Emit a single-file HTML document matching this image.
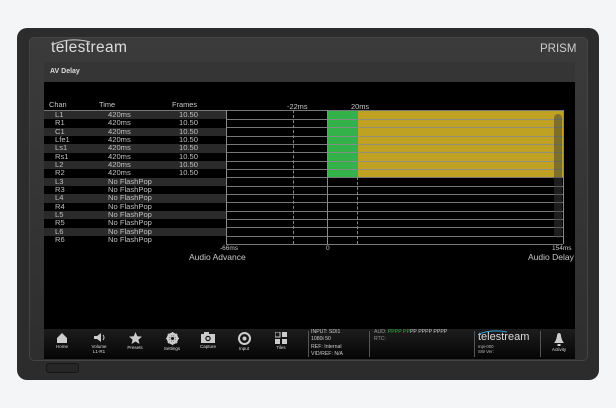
<!DOCTYPE html>
<html><head><meta charset="utf-8"><style>
*{margin:0;padding:0;box-sizing:border-box}
body{width:616px;height:408px;background:#f4f5f7;position:relative;overflow:hidden;font-family:"Liberation Sans",sans-serif}
.a{position:absolute}
#dev{left:17px;top:28px;width:582px;height:352px;background:#2c2c2c;border-radius:10px}
#bez{left:29px;top:37px;width:559px;height:324px;background:linear-gradient(#3b3b3b,#2e2e2e);border-radius:5px;border:1px solid #444}
#btn{left:46px;top:363px;width:33px;height:10px;border:1px solid #151515;border-radius:3px;background:#262626}
.t{color:#c8c8c8;font-size:7.4px;white-space:nowrap}
.row{position:absolute;left:44px;width:182px;height:8.33px}
.row span{position:absolute;top:0;font-size:7.6px;color:#c0c0c0;line-height:8.3px}
.g{position:absolute;left:226px;width:337px;height:1px;background:rgba(140,140,140,0.85);z-index:2}
.ic{position:absolute;top:332px;text-align:center;color:#ddd;font-size:4.5px;width:30px}
.ic svg{display:block;margin:0 auto 1px}
</style></head><body>
<div class="a" id="dev"></div>
<div class="a" id="bez"></div>
<div class="a" id="btn"></div>
<div class="a" style="left:51px;top:39px;font-size:15.5px;color:#ddd;letter-spacing:0.4px">telestream</div>
<svg class="a" style="left:52px;top:37px" width="40" height="8"><path d="M2 7 Q18 0 38 5" stroke="#ccc" stroke-width="1" fill="none"/></svg>
<div class="a" style="left:540px;top:43px;font-size:11.5px;color:#ccc">PRISM</div>
<div class="a" style="left:44px;top:62px;width:531px;height:20px;background:#353535"></div>
<div class="a" style="left:50px;top:68px;font-size:7px;color:#ddd;font-weight:bold">AV Delay</div>
<div class="a" style="left:44px;top:82px;width:531px;height:247px;background:#000"></div>
<div class="a t" style="left:49px;top:100px">Chan</div>
<div class="a t" style="left:99px;top:100px">Time</div>
<div class="a t" style="left:172px;top:100px">Frames</div>
<div class="a t" style="left:287px;top:102px">-22ms</div>
<div class="a t" style="left:351px;top:102px">20ms</div>
<div class="a" style="left:44px;top:110px;width:519px;height:1px;background:#777"></div>
<div id="rows"></div>
<div class="a" style="left:327px;top:111px;width:31px;height:66px;background:#34b24a"></div>
<div class="a" style="left:358px;top:111px;width:205px;height:66px;background:#c0a222"></div>
<div class="a" style="left:554px;top:114px;width:8px;height:124px;background:rgba(60,60,60,0.5);border-radius:4px;z-index:3"></div>
<div class="a" style="left:226px;top:110px;width:1px;height:134px;background:#8a8a8a"></div>
<div class="a" style="left:327px;top:110px;width:1px;height:134px;background:#8a8a8a"></div>
<div class="a" style="left:563px;top:110px;width:1px;height:134px;background:#8a8a8a"></div>
<div class="a" style="left:293px;top:110px;width:0;height:134px;border-left:1px dashed #888"></div>
<div class="a" style="left:357px;top:177px;width:0;height:67px;border-left:1px dashed #888"></div>
<div class="a t" style="left:220px;top:245px;font-size:6.5px">-66ms</div>
<div class="a t" style="left:189px;top:252px;font-size:8.5px">Audio Advance</div>
<div class="a t" style="left:326px;top:245px;font-size:6.5px">0</div>
<div class="a t" style="left:552px;top:245px;font-size:6.5px">154ms</div>
<div class="a t" style="left:528px;top:252px;font-size:8.5px">Audio Delay</div>
<div class="a" style="left:44px;top:329px;width:531px;height:30px;background:linear-gradient(#1d1d1d,#050505)"></div>
<div class="ic" style="left:47px"><svg width="12" height="11"><path d="M1 6 L6 1 L11 6 V11 H1Z" fill="#ccc"/></svg>Home</div>
<div class="ic" style="left:84px"><svg width="12" height="11"><path d="M1 4 H4 L8 1 V10 L4 7 H1Z" fill="#ccc"/><path d="M10 3 Q12 5.5 10 8" stroke="#ccc" fill="none"/></svg>Volume<br>L1-R1</div>
<div class="ic" style="left:120px"><svg width="13" height="12"><path d="M6.5 0 L8.3 4.3 L13 4.6 L9.4 7.6 L10.5 12 L6.5 9.5 L2.5 12 L3.6 7.6 L0 4.6 L4.7 4.3Z" fill="#ccc"/></svg>Presets</div>
<div class="ic" style="left:157px"><svg width="13" height="13"><circle cx="6.5" cy="6.5" r="4.5" fill="none" stroke="#ccc" stroke-width="2.5"/><path d="M6.5 0V13M0 6.5H13M2 2L11 11M11 2L2 11" stroke="#ccc" stroke-width="1.6"/><circle cx="6.5" cy="6.5" r="1.5" fill="#111"/></svg>Settings</div>
<div class="ic" style="left:193px"><svg width="14" height="11"><rect x="0" y="2" width="14" height="9" fill="#ccc"/><rect x="3" y="0" width="5" height="3" fill="#ccc"/><circle cx="7" cy="6.5" r="2.7" fill="#111"/><circle cx="7" cy="6.5" r="1.5" fill="#ccc"/></svg>Capture</div>
<div class="ic" style="left:229px"><svg width="13" height="13"><circle cx="6.5" cy="6.5" r="5.5" fill="none" stroke="#ccc" stroke-width="2"/><circle cx="6.5" cy="6.5" r="2" fill="#ccc"/></svg>Input</div>
<div class="ic" style="left:266px"><svg width="12" height="12"><rect x="0" y="0" width="5" height="5" fill="none" stroke="#ccc"/><rect x="7" y="0" width="5" height="5" fill="#ccc"/><rect x="0" y="7" width="5" height="5" fill="#ccc"/><rect x="7" y="7" width="5" height="5" fill="#ccc"/></svg>Tiles</div>
<div class="a" style="left:308px;top:331px;width:1px;height:26px;background:#555"></div>
<div class="a" style="left:311px;top:329px;font-size:5.2px;color:#ccc;line-height:7.3px">INPUT: SDI1<br>1080i 50<br>REF: Internal<br>VID/REF: N/A</div>
<div class="a" style="left:369px;top:331px;width:1px;height:26px;background:#555"></div>
<div class="a" style="left:374px;top:329px;font-size:5.2px;color:#999;line-height:7.3px">AUD: <span style="color:#2fae3d">PPPP PP</span><span style="color:#ccc">PP PPPP PPPP</span><br>RTC:</div>
<div class="a" style="left:474px;top:331px;width:1px;height:26px;background:#555"></div>
<div class="a" style="left:478px;top:331px;font-size:11px;color:#ddd">telestream</div>
<svg class="a" style="left:478px;top:330px" width="30" height="5"><path d="M1 4 Q14 -1 29 2" stroke="#2a9ad6" stroke-width="1" fill="none"/></svg>
<div class="a" style="left:478px;top:344px;font-size:4.3px;color:#bbb;line-height:5px">mpi-000<br>SW Ver:</div>
<div class="a" style="left:540px;top:331px;width:1px;height:26px;background:#555"></div>
<div class="ic" style="left:544px;top:333px"><svg width="10" height="13"><path d="M5 0 Q7 0 7 3 Q8 8 10 10 H0 Q2 8 3 3 Q3 0 5 0Z M3.5 11 H6.5 V13 H3.5Z" fill="#ccc"/></svg>Activity</div>
<script>
var d=[["L1","420ms","10.50"],["R1","420ms","10.50"],["C1","420ms","10.50"],["Lfe1","420ms","10.50"],["Ls1","420ms","10.50"],["Rs1","420ms","10.50"],["L2","420ms","10.50"],["R2","420ms","10.50"],["L3","No FlashPop",""],["R3","No FlashPop",""],["L4","No FlashPop",""],["R4","No FlashPop",""],["L5","No FlashPop",""],["R5","No FlashPop",""],["L6","No FlashPop",""],["R6","No FlashPop",""]];
var h="";
for(var i=0;i<16;i++){var y=111+i*8.33;
h+='<div class="row" style="top:'+y+'px;background:'+(i%2?'#000':'#2a2a2a')+'"><span style="left:11px">'+d[i][0]+'</span><span style="left:64px">'+d[i][1]+'</span><span style="left:135px">'+d[i][2]+'</span></div>';
h+='<div class="g" style="top:'+(y+8)+'px"></div>';}
document.getElementById("rows").innerHTML=h;
</script>
</body></html>
